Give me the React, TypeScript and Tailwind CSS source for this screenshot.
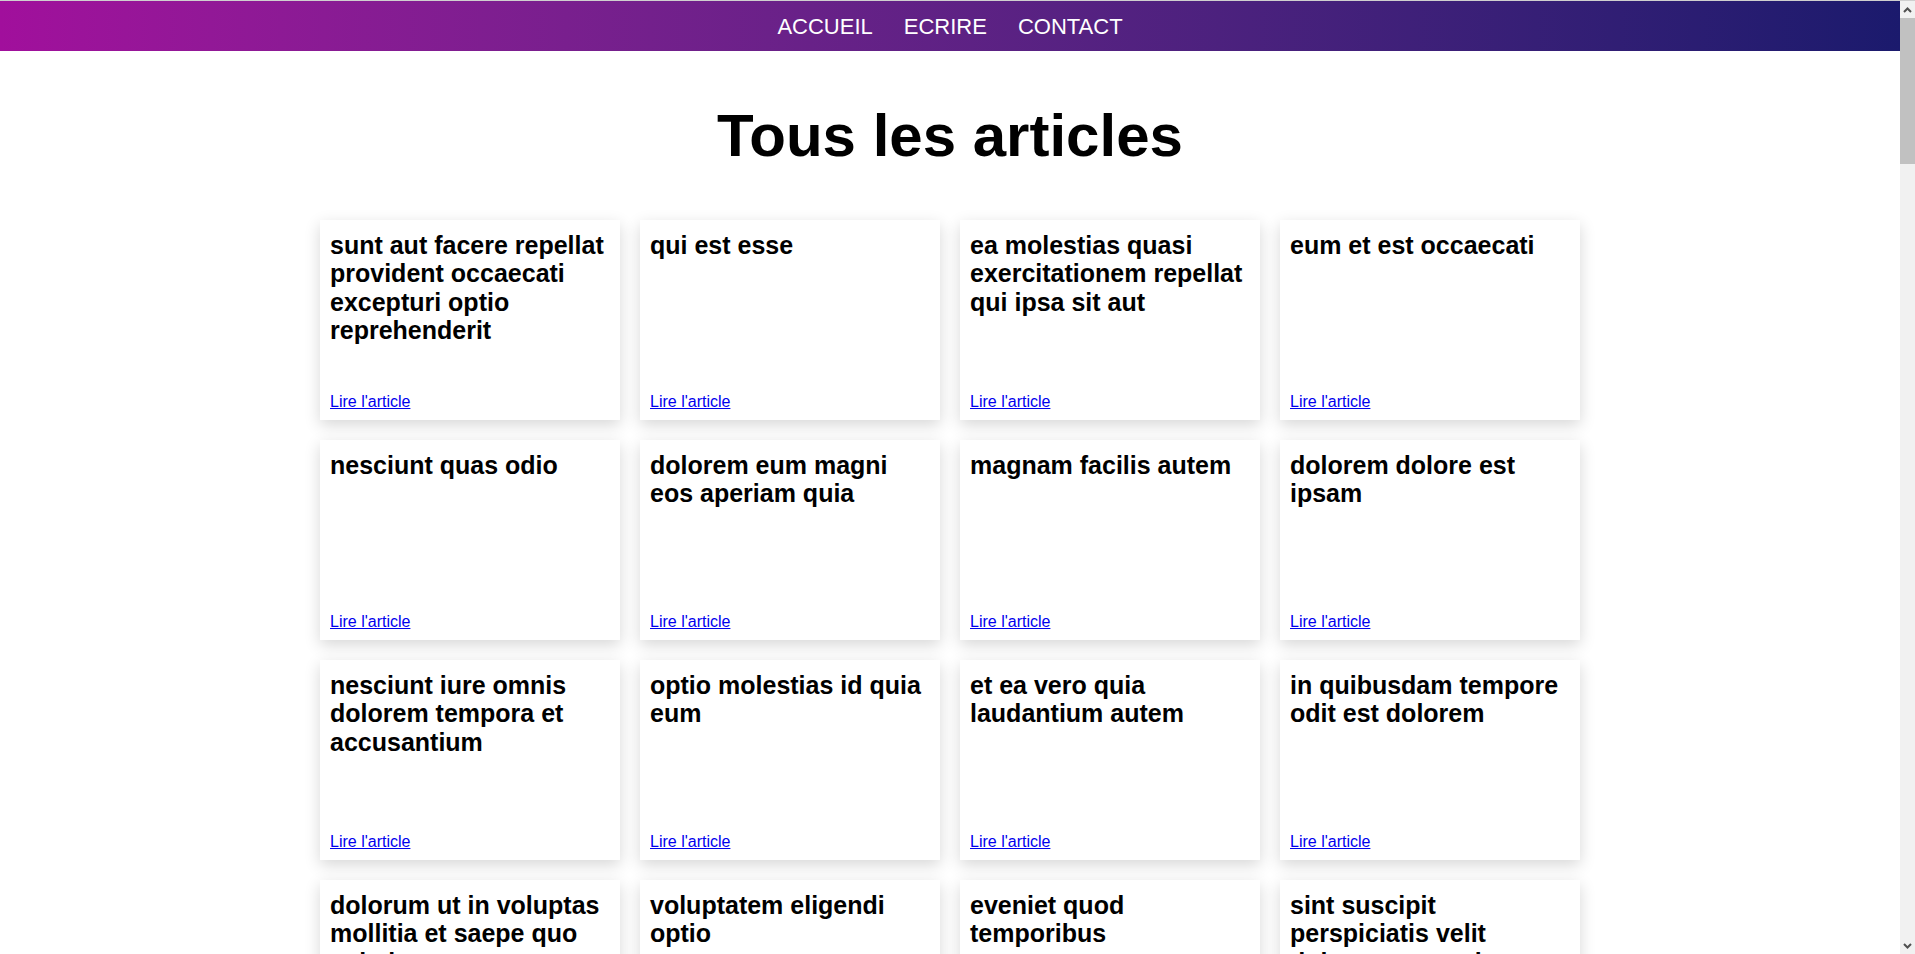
const posts = [
  'sunt aut facere repellat provident occaecati excepturi optio reprehenderit',
  'qui est esse',
  'ea molestias quasi exercitationem repellat qui ipsa sit aut',
  'eum et est occaecati',
  'nesciunt quas odio',
  'dolorem eum magni eos aperiam quia',
  'magnam facilis autem',
  'dolorem dolore est ipsam',
  'nesciunt iure omnis dolorem tempora et accusantium',
  'optio molestias id quia eum',
  'et ea vero quia laudantium autem',
  'in quibusdam tempore odit est dolorem',
  'dolorum ut in voluptas mollitia et saepe quo animi',
  'voluptatem eligendi optio',
  'eveniet quod temporibus',
  'sint suscipit perspiciatis velit dolorum rerum ipsa laboriosam odio',
  'fugit voluptas sed molestias voluptatem provident',
  'voluptate et itaque vero tempora molestiae',
  'adipisci placeat illum aut reiciendis qui',
  'doloribus ad provident suscipit at',
]

function ArticleCard({ title }: { title: string }) {
  return (
    <div className="flex h-[200px] flex-col justify-between bg-white px-[10px] pt-[11px] pb-[9px] shadow-[0_5px_15px_rgba(0,0,0,0.16)]">
      <h2 className="text-[25px] font-bold leading-[28.3px]">{title}</h2>
      <a href="#" className="text-[16px] leading-[18px] text-[#0000ee] underline">
        Lire l'article
      </a>
    </div>
  )
}

// fake browser scrollbar, the page in the screenshot is scrolled to the top
function Scrollbar() {
  return (
    <div className="flex w-[15px] shrink-0 flex-col bg-[#f1f1f1]">
      <div className="flex h-[17px] items-center justify-center">
        <svg width="9" height="6" viewBox="0 0 9 6">
          <path d="M1 5 L4.5 1.5 L8 5" fill="none" stroke="#505050" strokeWidth="2" />
        </svg>
      </div>
      <div className="h-[146px] bg-[#c1c1c1]" />
      <div className="flex-1" />
      <div className="flex h-[17px] items-center justify-center">
        <svg width="9" height="6" viewBox="0 0 9 6">
          <path d="M1 1 L4.5 4.5 L8 1" fill="none" stroke="#505050" strokeWidth="2" />
        </svg>
      </div>
    </div>
  )
}

export default function App() {
  return (
    <div className="flex h-screen overflow-hidden border-t border-[#cfcfcf] bg-white font-['Liberation_Sans',Arial,sans-serif] text-black">
      <div className="min-w-0 flex-1 overflow-hidden">
        <nav className="flex h-[50px] items-center justify-center gap-[31px] bg-linear-to-r from-[#a10f9c] to-[#1b1a6d] pt-[1px]">
          <a href="#" className="text-[22px] text-white">ACCUEIL</a>
          <a href="#" className="text-[22px] text-white">ECRIRE</a>
          <a href="#" className="text-[22px] text-white">CONTACT</a>
        </nav>

        <h1 className="my-[50px] text-center text-[60px] font-bold leading-[69px]">Tous les articles</h1>

        <div className="mx-auto grid w-[1260px] grid-cols-4 gap-5 pb-5">
          {posts.map((title, i) => (
            <ArticleCard key={i} title={title} />
          ))}
        </div>
      </div>
      <Scrollbar />
    </div>
  )
}
